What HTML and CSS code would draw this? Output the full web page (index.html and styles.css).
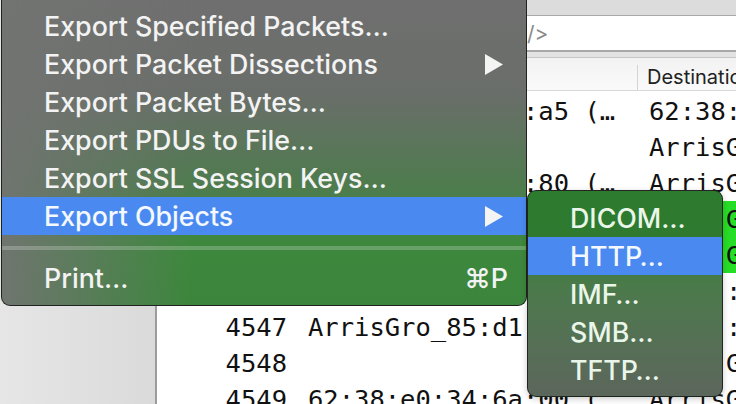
FILE: index.html
```html
<!DOCTYPE html>
<html>
<head>
	<title>Export Objects</title>
	<meta charset="UTF-8">
	<link rel="stylesheet" href="styles.css">
</head>
<body>
	<div class="screen">
		<div class="sidebar"></div>
		<div class="window">
			<div class="toolbar"></div>
			<div class="filter"><span class="filter-hint">/&gt;</span></div>
			<div class="filter-gap"></div>
			<div class="col-header">
				<div class="col-title"></div>
				<div class="col-title"></div>
				<div class="col-title col-dst">Destination</div>
			</div>
			<!-- rows under the menus are left blank, only the visible parts carry text -->
			<div class="packets">
				<div class="packet"><span class="no"></span><span class="src peek-src">:a5 (…</span><span class="dst">62:38:e0:34:6a:…</span></div>
				<div class="packet"><span class="no"></span><span class="src"></span><span class="dst">ArrisGro_85:d1</span></div>
				<div class="packet"><span class="no"></span><span class="src peek-src">:80 (…</span><span class="dst">ArrisGro_85:d1</span></div>
				<div class="packet green"><span class="no"></span><span class="src"></span><span class="dst peek-dst">Gro_85:d1</span></div>
				<div class="packet green"><span class="no"></span><span class="src"></span><span class="dst peek-dst">Gro_85:d1</span></div>
				<div class="packet"><span class="no"></span><span class="src"></span><span class="dst peek-dst">:e0:34:6a:…</span></div>
				<div class="packet"><span class="no">4547</span><span class="src">ArrisGro_85:d1</span><span class="dst peek-dst">:e0:34:6a:…</span></div>
				<div class="packet"><span class="no">4548</span><span class="src"></span><span class="dst peek-dst">Gro_85:d1</span></div>
				<div class="packet"><span class="no">4549</span><span class="src">62:38:e0:34:6a:00 (…</span><span class="dst">ArrisGro_85:d1</span></div>
			</div>
		</div>

		<!-- File menu -->
		<div class="menu">
			<div class="menu-item"><span class="menu-label">Export Specified Packets…</span></div>
			<div class="menu-item"><span class="menu-label">Export Packet Dissections</span>
				<svg class="arrow" width="18" height="21" viewBox="0 0 18 21"><polygon points="0,0 18,10.5 0,21" fill="#f4f4f4"/></svg>
			</div>
			<div class="menu-item"><span class="menu-label">Export Packet Bytes…</span></div>
			<div class="menu-item"><span class="menu-label">Export PDUs to File…</span></div>
			<div class="menu-item"><span class="menu-label">Export SSL Session Keys…</span></div>
			<div class="menu-item active"><span class="menu-label">Export Objects</span>
				<svg class="arrow" width="18" height="21" viewBox="0 0 18 21"><polygon points="0,0 18,10.5 0,21" fill="#f4f4f4"/></svg>
			</div>
			<div class="menu-sep"></div>
			<div class="menu-item"><span class="menu-label">Print…</span><span class="shortcut">⌘P</span></div>
		</div>

		<!-- Export Objects submenu -->
		<div class="submenu">
			<div class="menu-item">DICOM…</div>
			<div class="menu-item active">HTTP…</div>
			<div class="menu-item">IMF…</div>
			<div class="menu-item">SMB…</div>
			<div class="menu-item">TFTP…</div>
		</div>
	</div>
</body>
</html>
```

FILE: styles.css
```css
body {
	margin: 0;
	background-color: #e4e4e4;
}
.screen {
	position: relative;
	display: flex;
	width: 736px;
	height: 404px;
	overflow: hidden;
}
.sidebar {
	width: 155px;
	flex-shrink: 0;
	background: linear-gradient(to right, #e6e6e6, #dadada);
	border-right: 2px solid #9c9c9c;
}
.window {
	flex: 1;
	display: flex;
	flex-direction: column;
	background-color: #fff;
	min-width: 0;
}
.window > div {
	flex-shrink: 0;
}
.toolbar {
	height: 15px;
	background-color: #dcdcdc;
	border-bottom: 1px solid #a9a9a9;
}
.filter {
	height: 34px;
	background-color: #fff;
	border-bottom: 2px solid #a8a8a8;
	display: flex;
	align-items: center;
	padding-left: 370px;
	font-family: "Inter", "DejaVu Sans", sans-serif;
	font-size: 21px;
	color: #8a8a8a;
}
.filter-gap {
	height: 5px;
	background-color: #e2e2e2;
	border-bottom: 1px solid #c4c4c4;
}
.col-header {
	height: 32px;
	display: grid;
	grid-template-columns: 151px 329px 1fr;
	background: linear-gradient(#f2f2f2, #fafafa);
	border-bottom: 1px solid #d8d8d8;
	font-family: "Inter", "DejaVu Sans", sans-serif;
	font-size: 20px;
	color: #222;
}
.col-title {
	white-space: nowrap;
	overflow: hidden;
}
.col-dst {
	margin-top: 7px;
	padding-left: 9px;
	border-left: 1px solid #d4d4d4;
	line-height: 25px;
}
.packets {
	padding-top: 2px;
	font-family: "DejaVu Sans Mono", monospace;
	font-size: 25.5px;
	color: #111;
}
.packet {
	height: 36px;
	display: grid;
	grid-template-columns: 151px 341px 1fr;
	align-items: center;
	white-space: nowrap;
}
.packet span {
	overflow: hidden;
}
.packet.green {
	background-color: #27dd27;
}
.no {
	text-align: right;
	padding-right: 21px;
}
.peek-src {
	padding-left: 215px;
}
.peek-dst {
	padding-left: 77px;
}

/* menus */
.menu, .submenu {
	position: absolute;
	box-sizing: border-box;
	font-family: "Inter", "DejaVu Sans", sans-serif;
	font-size: 26.8px;
	font-weight: 500;
	color: #f3f3f3;
}
.menu {
	top: -8px;
	left: 1px;
	width: 526px;
	padding: 14px 0 8px;
	border: 1px solid rgba(20, 20, 20, 0.85);
	border-radius: 0 0 9px 9px;
	background:
		linear-gradient(to right, rgba(114, 116, 114, 0.95), rgba(114, 116, 114, 0) 190px),
		linear-gradient(to bottom, #6f6f6f 0, #6a6e6a 100px, #4f7b4f 190px, #3e883e 250px, #3c853c 100%);
}
.submenu {
	top: 190px;
	left: 527px;
	width: 196px;
	padding: 8px 0 7px;
	border: 1px solid rgba(25, 25, 25, 0.85);
	border-radius: 9px;
	color: #eaf6ea;
	background: linear-gradient(to bottom, #2c7b2e 0, #2f7a30 45px, #4b7a4b 95px, #557055 150px, #5c665c 100%);
	box-shadow: 0 2px 6px rgba(0, 0, 0, 0.2);
}
.menu-item {
	display: flex;
	align-items: center;
	height: 38px;
	padding: 0 23px 0 42px;
	white-space: nowrap;
}
.menu-item.active {
	background-color: #4a8af0;
	color: #f4f8ff;
}
.menu-label {
	flex: 1;
}
.shortcut {
	margin-right: -5px;
}
.menu-sep {
	height: 24px;
	box-sizing: border-box;
	padding-top: 11px;
}
.menu-sep::after {
	content: "";
	display: block;
	height: 4px;
	background-color: rgba(255, 255, 255, 0.22);
}
```
